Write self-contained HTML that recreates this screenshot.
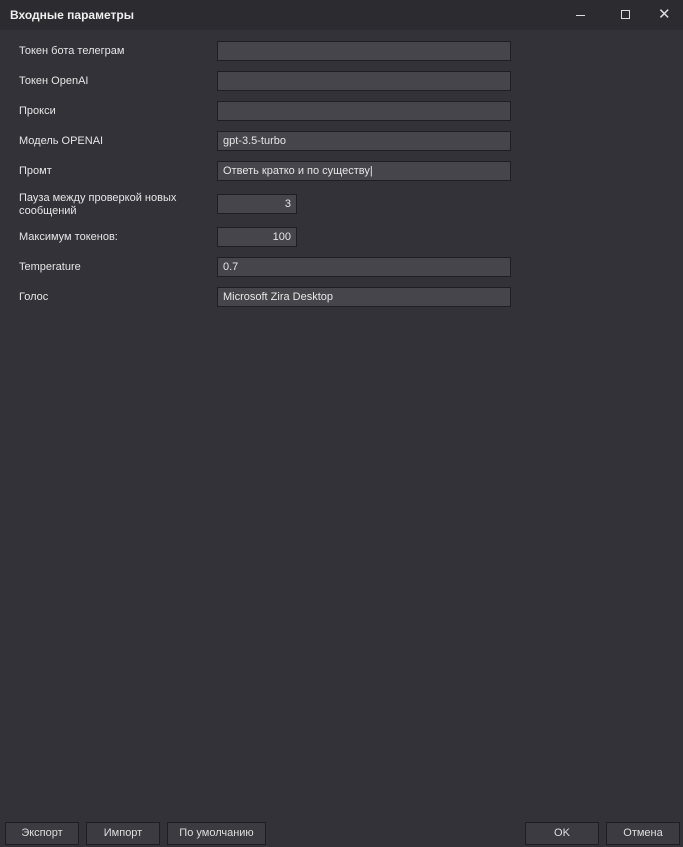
<!DOCTYPE html><html><head><meta charset="utf-8"><style>
body{margin:0;width:683px;height:847px;background:#333238;font-family:"Liberation Sans",sans-serif;font-size:11px;color:#e6e6e6;position:relative;overflow:hidden}
.t{position:absolute;left:0;top:0;width:683px;height:30px;background:#2c2b30}
.t b{position:absolute;left:10px;top:8px;font-size:12px;color:#eee}
.l{position:absolute;left:19px}
.i{position:absolute;left:217px;width:292px;height:18px;background:#46454b;border:1px solid #1f1f22;line-height:18px;padding-left:5px;box-sizing:content-box}
.i.n{width:78px;padding:0;text-align:right}
.i.n span{padding-right:5px}
.b{position:absolute;top:822px;height:21px;background:#3c3b41;border:1px solid #1e1e21;text-align:center;line-height:21px;color:#ddd}
</style></head><body>
<div class="t"><b>Входные параметры</b>
<div style="position:absolute;left:576px;top:15px;width:9px;height:1px;background:#ddd"></div>
<div style="position:absolute;left:621px;top:10px;width:7px;height:7px;border:1px solid #ddd"></div>
<div style="position:absolute;left:658px;top:5px;font-size:15px;color:#ddd">✕</div></div>
<div class="l" style="top:45px">Токен бота телеграм</div><div class="i" style="top:41px;width:287px"></div>
<div class="l" style="top:75px">Токен OpenAI</div><div class="i" style="top:71px;width:287px"></div>
<div class="l" style="top:105px">Прокси</div><div class="i" style="top:101px;width:287px"></div>
<div class="l" style="top:135px">Модель OPENAI</div><div class="i" style="top:131px;width:287px">gpt-3.5-turbo</div>
<div class="l" style="top:165px">Промт</div><div class="i" style="top:161px;width:287px">Ответь кратко и по существу|</div>
<div class="l" style="top:192px;line-height:13px">Пауза между проверкой новых<br>сообщений</div><div class="i n" style="top:194px"><span>3</span></div>
<div class="l" style="top:231px">Максимум токенов:</div><div class="i n" style="top:227px"><span>100</span></div>
<div class="l" style="top:261px">Temperature</div><div class="i" style="top:257px;width:287px">0.7</div>
<div class="l" style="top:291px">Голос</div><div class="i" style="top:287px;width:287px">Microsoft Zira Desktop</div>
<div class="b" style="left:5px;width:72px">Экспорт</div>
<div class="b" style="left:86px;width:72px">Импорт</div>
<div class="b" style="left:167px;width:97px">По умолчанию</div>
<div class="b" style="left:525px;width:72px">OK</div>
<div class="b" style="left:606px;width:72px">Отмена</div>
</body></html>
